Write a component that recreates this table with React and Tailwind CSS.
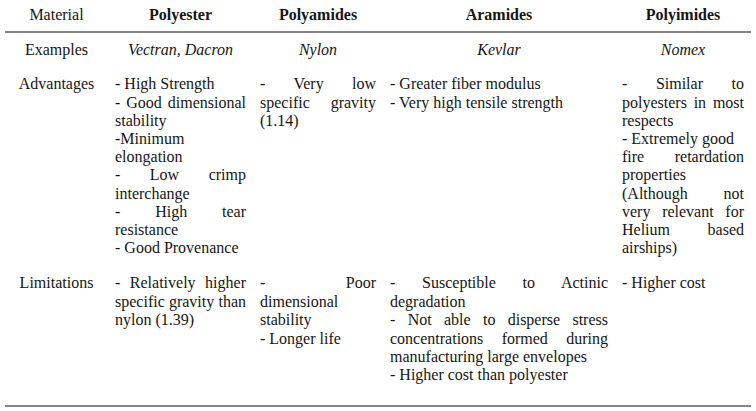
import React from "react";

const J = (t) => ({ t, j: true });
const N = (t) => ({ t, j: false });

const rows = [
  {
    label: "Advantages",
    cells: [
      [
        N("- High Strength"),
        J("- Good dimensional"),
        N("stability"),
        N("-Minimum"),
        N("elongation"),
        J("- Low crimp"),
        N("interchange"),
        J("- High tear"),
        N("resistance"),
        N("- Good Provenance"),
      ],
      [J("- Very low"), J("specific gravity"), N("(1.14)")],
      [N("- Greater fiber modulus"), N("- Very high tensile strength")],
      [
        J("- Similar to"),
        J("polyesters in most"),
        N("respects"),
        N("- Extremely good"),
        J("fire retardation"),
        N("properties"),
        J("(Although not"),
        J("very relevant for"),
        J("Helium based"),
        N("airships)"),
      ],
    ],
  },
  {
    label: "Limitations",
    cells: [
      [J("- Relatively higher"), J("specific gravity than"), N("nylon (1.39)")],
      [J("- Poor"), N("dimensional"), N("stability"), N("- Longer life")],
      [
        J("- Susceptible to Actinic"),
        N("degradation"),
        J("- Not able to disperse stress"),
        J("concentrations formed during"),
        N("manufacturing large envelopes"),
        N("- Higher cost than polyester"),
      ],
      [N("- Higher cost")],
    ],
  },
];

const grid =
  "grid grid-cols-[103px_145px_130px_232px_136px] w-[746px]";

function Lines({ lines }) {
  return (
    <div>
      {lines.map((l, i) =>
        l.j ? (
          <div key={i} className="text-justify [text-align-last:justify]">
            {l.t}
          </div>
        ) : (
          <div key={i} className="whitespace-nowrap">
            {l.t}
          </div>
        )
      )}
    </div>
  );
}

export default function App() {
  return (
    <div
      className="w-[756px] h-[411px] bg-white pl-[5px] text-[#161616] text-[16px] leading-[18.2px]"
      style={{ fontFamily: '"Liberation Serif", "Times New Roman", serif' }}
    >
      {/* header */}
      <div className={`${grid} pt-[6px] pb-[7px] border-b-2 border-[#858585]`}>
        <div className="px-[7px] text-center">Material</div>
        <div className="px-[7px] text-center font-bold">Polyester</div>
        <div className="px-[7px] text-center font-bold">Polyamides</div>
        <div className="px-[7px] text-center font-bold">Aramides</div>
        <div className="px-[7px] text-center font-bold">Polyimides</div>
      </div>
      {/* examples */}
      <div className={`${grid} py-[8px]`}>
        <div className="px-[7px] text-center">Examples</div>
        <div className="px-[7px] text-center italic">Vectran, Dacron</div>
        <div className="px-[7px] text-center italic">Nylon</div>
        <div className="px-[7px] text-center italic">Kevlar</div>
        <div className="px-[7px] text-center italic">Nomex</div>
      </div>
      {/* advantages */}
      <div className={`${grid} py-[8px]`}>
        <div className="px-[7px] text-center">{rows[0].label}</div>
        {rows[0].cells.map((c, i) => (
          <div key={i} className="px-[7px]">
            <Lines lines={c} />
          </div>
        ))}
      </div>
      {/* limitations */}
      <div
        className={`${grid} pt-[9px] pb-[20px] leading-[18.4px] border-b-2 border-[#858585]`}
      >
        <div className="px-[7px] text-center">{rows[1].label}</div>
        {rows[1].cells.map((c, i) => (
          <div key={i} className="px-[7px]">
            <Lines lines={c} />
          </div>
        ))}
      </div>
    </div>
  );
}
